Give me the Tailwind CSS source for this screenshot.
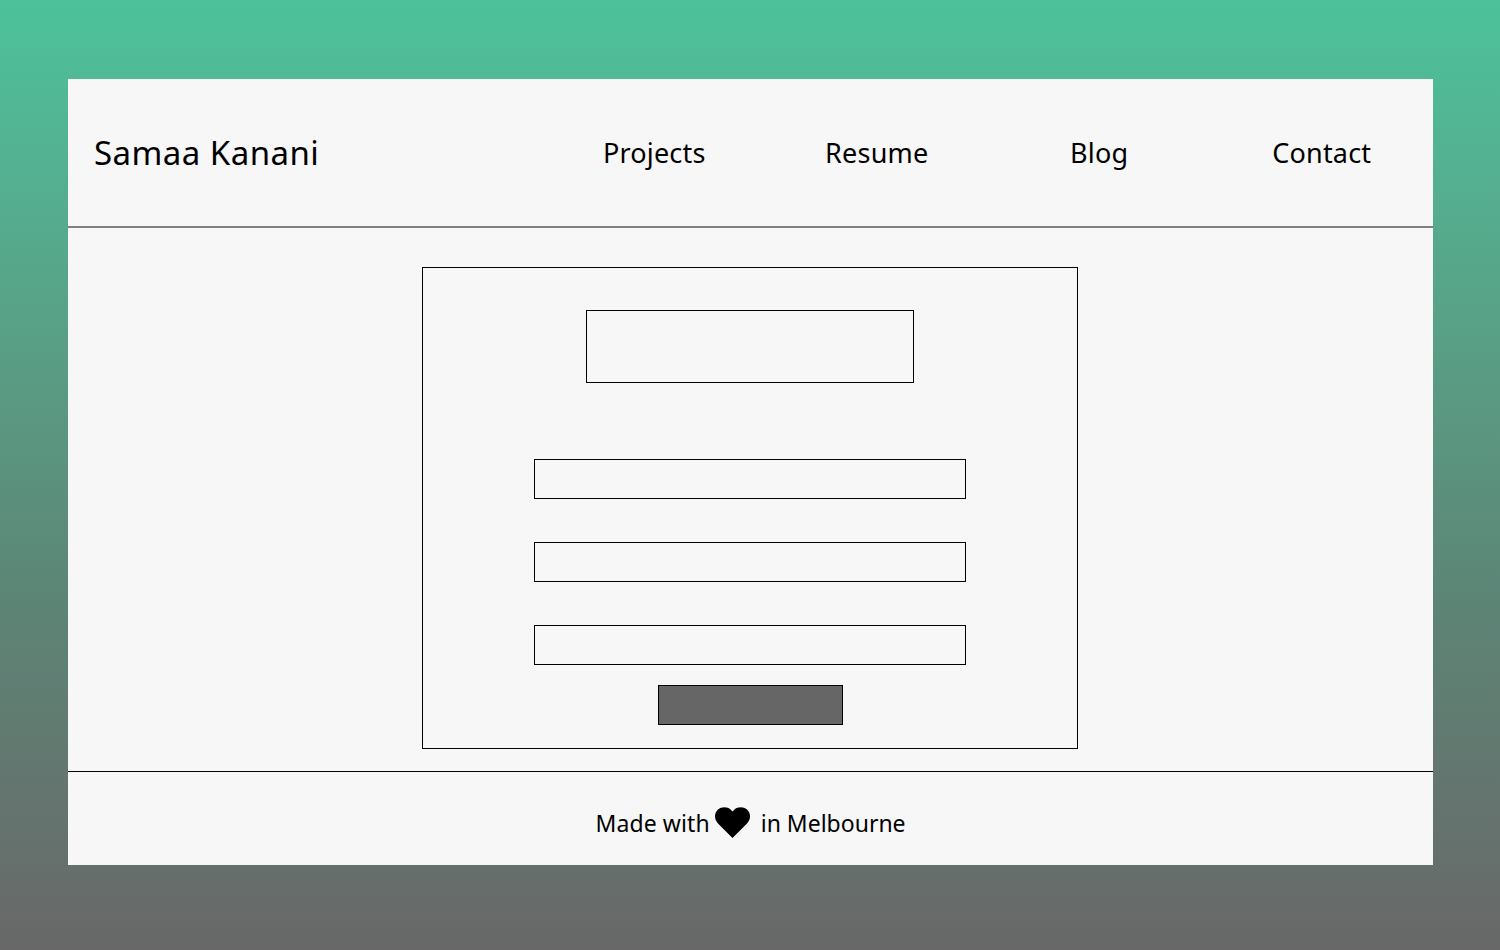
<!DOCTYPE html>
<html lang="en">
<head>
    <meta charset="UTF-8">
    <title>Samaa Kanani</title>
    <script src="https://cdn.jsdelivr.net/npm/@tailwindcss/browser@4"></script>
</head>
<body class="h-[950px] overflow-hidden bg-gradient-to-b from-[#4cc29b] via-[#5c8576] via-63% to-[#686868] pt-[79px] font-['Noto_Sans',sans-serif] text-black">

<div class="ml-[68px] flex h-[786px] w-[1365px] flex-col bg-[#f7f7f7]">
    <!-- Header -->
    <header class="flex h-[149px] shrink-0 items-center border-b-2 border-[#808080] pl-[26px]">
        <a href="#" class="w-[449px] text-[33px] tracking-[0.45px]">Samaa Kanani</a>
        <nav class="grid flex-1 grid-cols-4 pt-[2px] text-center text-[27px] tracking-[0.2px]">
            <a href="#">Projects</a>
            <a href="#">Resume</a>
            <a href="#">Blog</a>
            <a href="#">Contact</a>
        </nav>
    </header>

    <!-- Form -->
    <main class="flex-1 pt-[39px]">
        <form class="ml-[354px] flex h-[482px] w-[656px] flex-col items-center border border-black pt-[42px]">
            <div class="h-[73px] w-[328px] border border-black"></div>
            <input type="text" class="mt-[76px] h-10 w-[432px] shrink-0 border border-black">
            <input type="text" class="mt-[43px] h-10 w-[432px] shrink-0 border border-black">
            <input type="text" class="mt-[43px] h-10 w-[432px] shrink-0 border border-black">
            <button type="button" class="mt-5 h-10 w-[185px] border border-black bg-[#666666]"></button>
        </form>
    </main>

    <!-- Footer -->
    <footer class="flex h-[94px] shrink-0 items-center justify-center border-t border-black pt-[9px] text-[23px]">
        <span class="tracking-[0.1px]">Made with</span>
        <svg class="mr-[11px] ml-[5px] -mt-[2px] h-[31px] w-[35px]" viewBox="0 0 35 31" fill="currentColor"><path d="M17.5 31 3 16.500C-1 12.500-1 6 3 2.500 7-1 13 0 15.500 2.500L17.500 4.500 19.500 2.500C22 0 28-1 32 2.500 36 6 36 12.500 32 16.500Z"/></svg>
        <span>in Melbourne</span>
    </footer>
</div>

</body>
</html>
